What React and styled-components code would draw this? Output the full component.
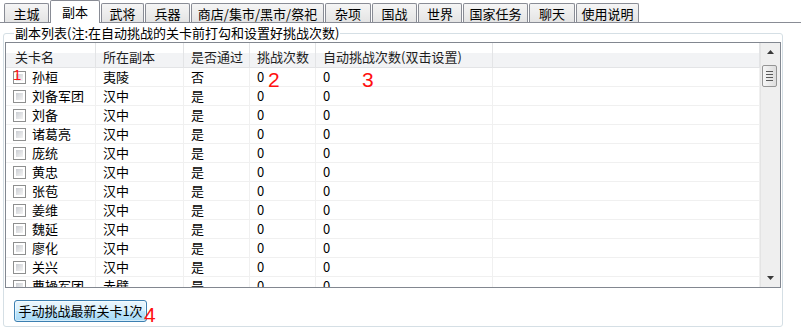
import React from 'react';
import styled, { createGlobalStyle } from 'styled-components';

const tabs = [
  { label: '主城', width: 45 },
  { label: '副本', width: 50, active: true },
  { label: '武将', width: 43 },
  { label: '兵器', width: 45 },
  { label: '商店/集市/黑市/祭祀', width: 133 },
  { label: '杂项', width: 46 },
  { label: '国战', width: 45 },
  { label: '世界', width: 44 },
  { label: '国家任务', width: 65 },
  { label: '聊天', width: 46 },
  { label: '使用说明', width: 63 },
];

const columns = ['关卡名', '所在副本', '是否通过', '挑战次数', '自动挑战次数(双击设置)', ''];

const stages = [
  ['孙桓', '夷陵', '否'],
  ['刘备军团', '汉中', '是'],
  ['刘备', '汉中', '是'],
  ['诸葛亮', '汉中', '是'],
  ['庞统', '汉中', '是'],
  ['黄忠', '汉中', '是'],
  ['张苞', '汉中', '是'],
  ['姜维', '汉中', '是'],
  ['魏延', '汉中', '是'],
  ['廖化', '汉中', '是'],
  ['关兴', '汉中', '是'],
  ['曹操军团', '赤壁', '是'],
];

const marks = [
  { text: '1', x: 13, y: 67, size: 15 },
  { text: '2', x: 268, y: 69, size: 21 },
  { text: '3', x: 362, y: 69, size: 21 },
  { text: '4', x: 144, y: 304, size: 21 },
];

export default function App() {
  return (
    <Window>
      <GlobalStyle />
      <TabStrip>
        {tabs.map((tab) => (
          <Tab key={tab.label} $width={tab.width} $active={tab.active}>
            {tab.label}
          </Tab>
        ))}
      </TabStrip>

      <GroupBox>
        <Legend>副本列表(注:在自动挑战的关卡前打勾和设置好挑战次数)</Legend>
        <ListView>
          <ListArea>
            <HeaderRow>
              {columns.map((col, i) => (
                <HeaderCell key={i} $first={i === 0}>{col}</HeaderCell>
              ))}
            </HeaderRow>
            {stages.map(([name, place, passed]) => (
              <Row key={name}>
                <Cell $first>
                  <CheckBox />
                  {name}
                </Cell>
                <Cell>{place}</Cell>
                <Cell>{passed}</Cell>
                <Cell>0</Cell>
                <Cell>0</Cell>
                <Cell />
              </Row>
            ))}
          </ListArea>
          <ScrollBar>
            <ArrowBox>
              <svg width="7" height="4" viewBox="0 0 7 4"><path d="M0 4 L3.5 0 L7 4 Z" fill="#3a3a3a" /></svg>
            </ArrowBox>
            <Thumb>
              <Grip /><Grip /><Grip /><Grip />
            </Thumb>
            <Track />
            <ArrowBox>
              <svg width="7" height="4" viewBox="0 0 7 4"><path d="M0 0 L3.5 4 L7 0 Z" fill="#3a3a3a" /></svg>
            </ArrowBox>
          </ScrollBar>
        </ListView>
        <ActionButton>手动挑战最新关卡1次</ActionButton>
      </GroupBox>

      {marks.map((m) => (
        <Mark key={m.text} $x={m.x} $y={m.y} $size={m.size}>{m.text}</Mark>
      ))}
    </Window>
  );
}

// Styles
const GlobalStyle = createGlobalStyle`
  html, body {
    margin: 0;
    padding: 0;
    background: #fff;
  }
  body {
    font-family: "Noto Sans CJK SC", "Liberation Sans", sans-serif;
    font-size: 13px;
    color: #000;
  }
`;

const Window = styled.div`
  position: relative;
  width: 801px;
  height: 330px;
  overflow: hidden;
  background: #fff;
`;

const TabStrip = styled.div`
  display: flex;
  align-items: flex-end;
  gap: 1px;
  height: 22px;
  padding-left: 4px;
  border-bottom: 1px solid #898c95;
`;

const Tab = styled.div`
  position: relative;
  z-index: ${(p) => (p.$active ? 1 : 0)};
  box-sizing: border-box;
  width: ${(p) => p.$width}px;
  height: ${(p) => (p.$active ? 23 : 19)}px;
  margin-bottom: ${(p) => (p.$active ? -1 : 0)}px;
  padding-top: ${(p) => (p.$active ? 0 : 2)}px;
  display: flex;
  align-items: center;
  justify-content: center;
  border: 1px solid #898c95;
  border-bottom: none;
  border-radius: 2px 2px 0 0;
  background: ${(p) => (p.$active ? '#fff' : 'linear-gradient(#f5f5f5, #e4e4e4)')};
  font-size: 13px;
  line-height: 16px;
  white-space: nowrap;
`;

const GroupBox = styled.fieldset`
  margin: 2px 18px 0 3px;
  padding: 1px 1px 4px 1px;
  border: 1px solid #d5dfe5;
  border-radius: 3px;
  min-width: 0;
`;

const Legend = styled.legend`
  margin-left: 9px;
  padding: 0 1px;
  font-size: 13px;
  line-height: 16px;
`;

const ListView = styled.div`
  display: flex;
  box-sizing: border-box;
  height: 246px;
  border: 1px solid #828790;
  background: #fff;
  overflow: hidden;
`;

const ListArea = styled.div`
  flex: 1;
  min-width: 0;
  overflow: hidden;
`;

const gridCols = '90px 88px 66px 66px 177px 1fr';

const HeaderRow = styled.div`
  display: grid;
  grid-template-columns: ${gridCols};
  box-sizing: border-box;
  height: 25px;
  border-bottom: 1px solid #e3e4e6;
  background: linear-gradient(#fff 0, #fff 40%, #f2f3f5 40%, #f2f3f5 100%);
`;

const HeaderCell = styled.div`
  display: flex;
  align-items: center;
  padding: 3px 0 0 ${(p) => (p.$first ? 9 : 7)}px;
  border-right: 1px solid #e3e4e6;
  color: #1e1e1e;
  line-height: 16px;
  white-space: nowrap;
`;

const Row = styled.div`
  display: grid;
  grid-template-columns: ${gridCols};
  box-sizing: border-box;
  height: 19px;
  border-bottom: 1px solid #f0f0f0;
`;

const Cell = styled.div`
  display: flex;
  align-items: center;
  gap: 6px;
  padding-left: 7px;
  border-right: 1px solid #f0f0f0;
  line-height: 18px;
  white-space: nowrap;
`;

const CheckBox = styled.span`
  flex: none;
  box-sizing: border-box;
  width: 13px;
  height: 13px;
  padding: 2px;
  border: 1px solid #8e8f8f;
  background: linear-gradient(135deg, #cbced3, #f3f3f3) content-box;
`;

const ScrollBar = styled.div`
  flex: none;
  display: flex;
  flex-direction: column;
  box-sizing: border-box;
  width: 20px;
  background: #efefef;
  border-left: 1px solid #e4e4e4;
`;

const ArrowBox = styled.div`
  height: 18px;
  display: flex;
  align-items: center;
  justify-content: center;
`;

const Thumb = styled.div`
  margin: 4px 3px 0 1px;
  height: 22px;
  box-sizing: border-box;
  border: 1px solid #959595;
  border-radius: 2px;
  background: linear-gradient(90deg, #f6f6f6, #dedede);
  display: flex;
  flex-direction: column;
  align-items: center;
  justify-content: center;
  gap: 2px;
`;

const Grip = styled.span`
  width: 7px;
  height: 1px;
  background: #5a5a5a;
`;

const Track = styled.div`
  flex: 1;
`;

const ActionButton = styled.button`
  display: block;
  margin: 12px 0 0 9px;
  width: 133px;
  height: 22px;
  padding: 0;
  border: 1px solid #3c7fb1;
  border-radius: 3px;
  background: linear-gradient(#eaf6fd 0%, #d9f0fc 50%, #bee6fd 50%, #a7d9f5 100%);
  box-shadow: inset 0 0 0 1px rgba(255, 255, 255, 0.5);
  font-family: "Noto Sans CJK SC", "Liberation Sans", sans-serif;
  font-size: 13px;
  line-height: 18px;
  color: #000;
  white-space: nowrap;
`;

const Mark = styled.span`
  position: absolute;
  left: ${(p) => p.$x}px;
  top: ${(p) => p.$y}px;
  font-family: "Liberation Sans", sans-serif;
  font-size: ${(p) => p.$size}px;
  line-height: 1;
  color: #ff1010;
  pointer-events: none;
`;
